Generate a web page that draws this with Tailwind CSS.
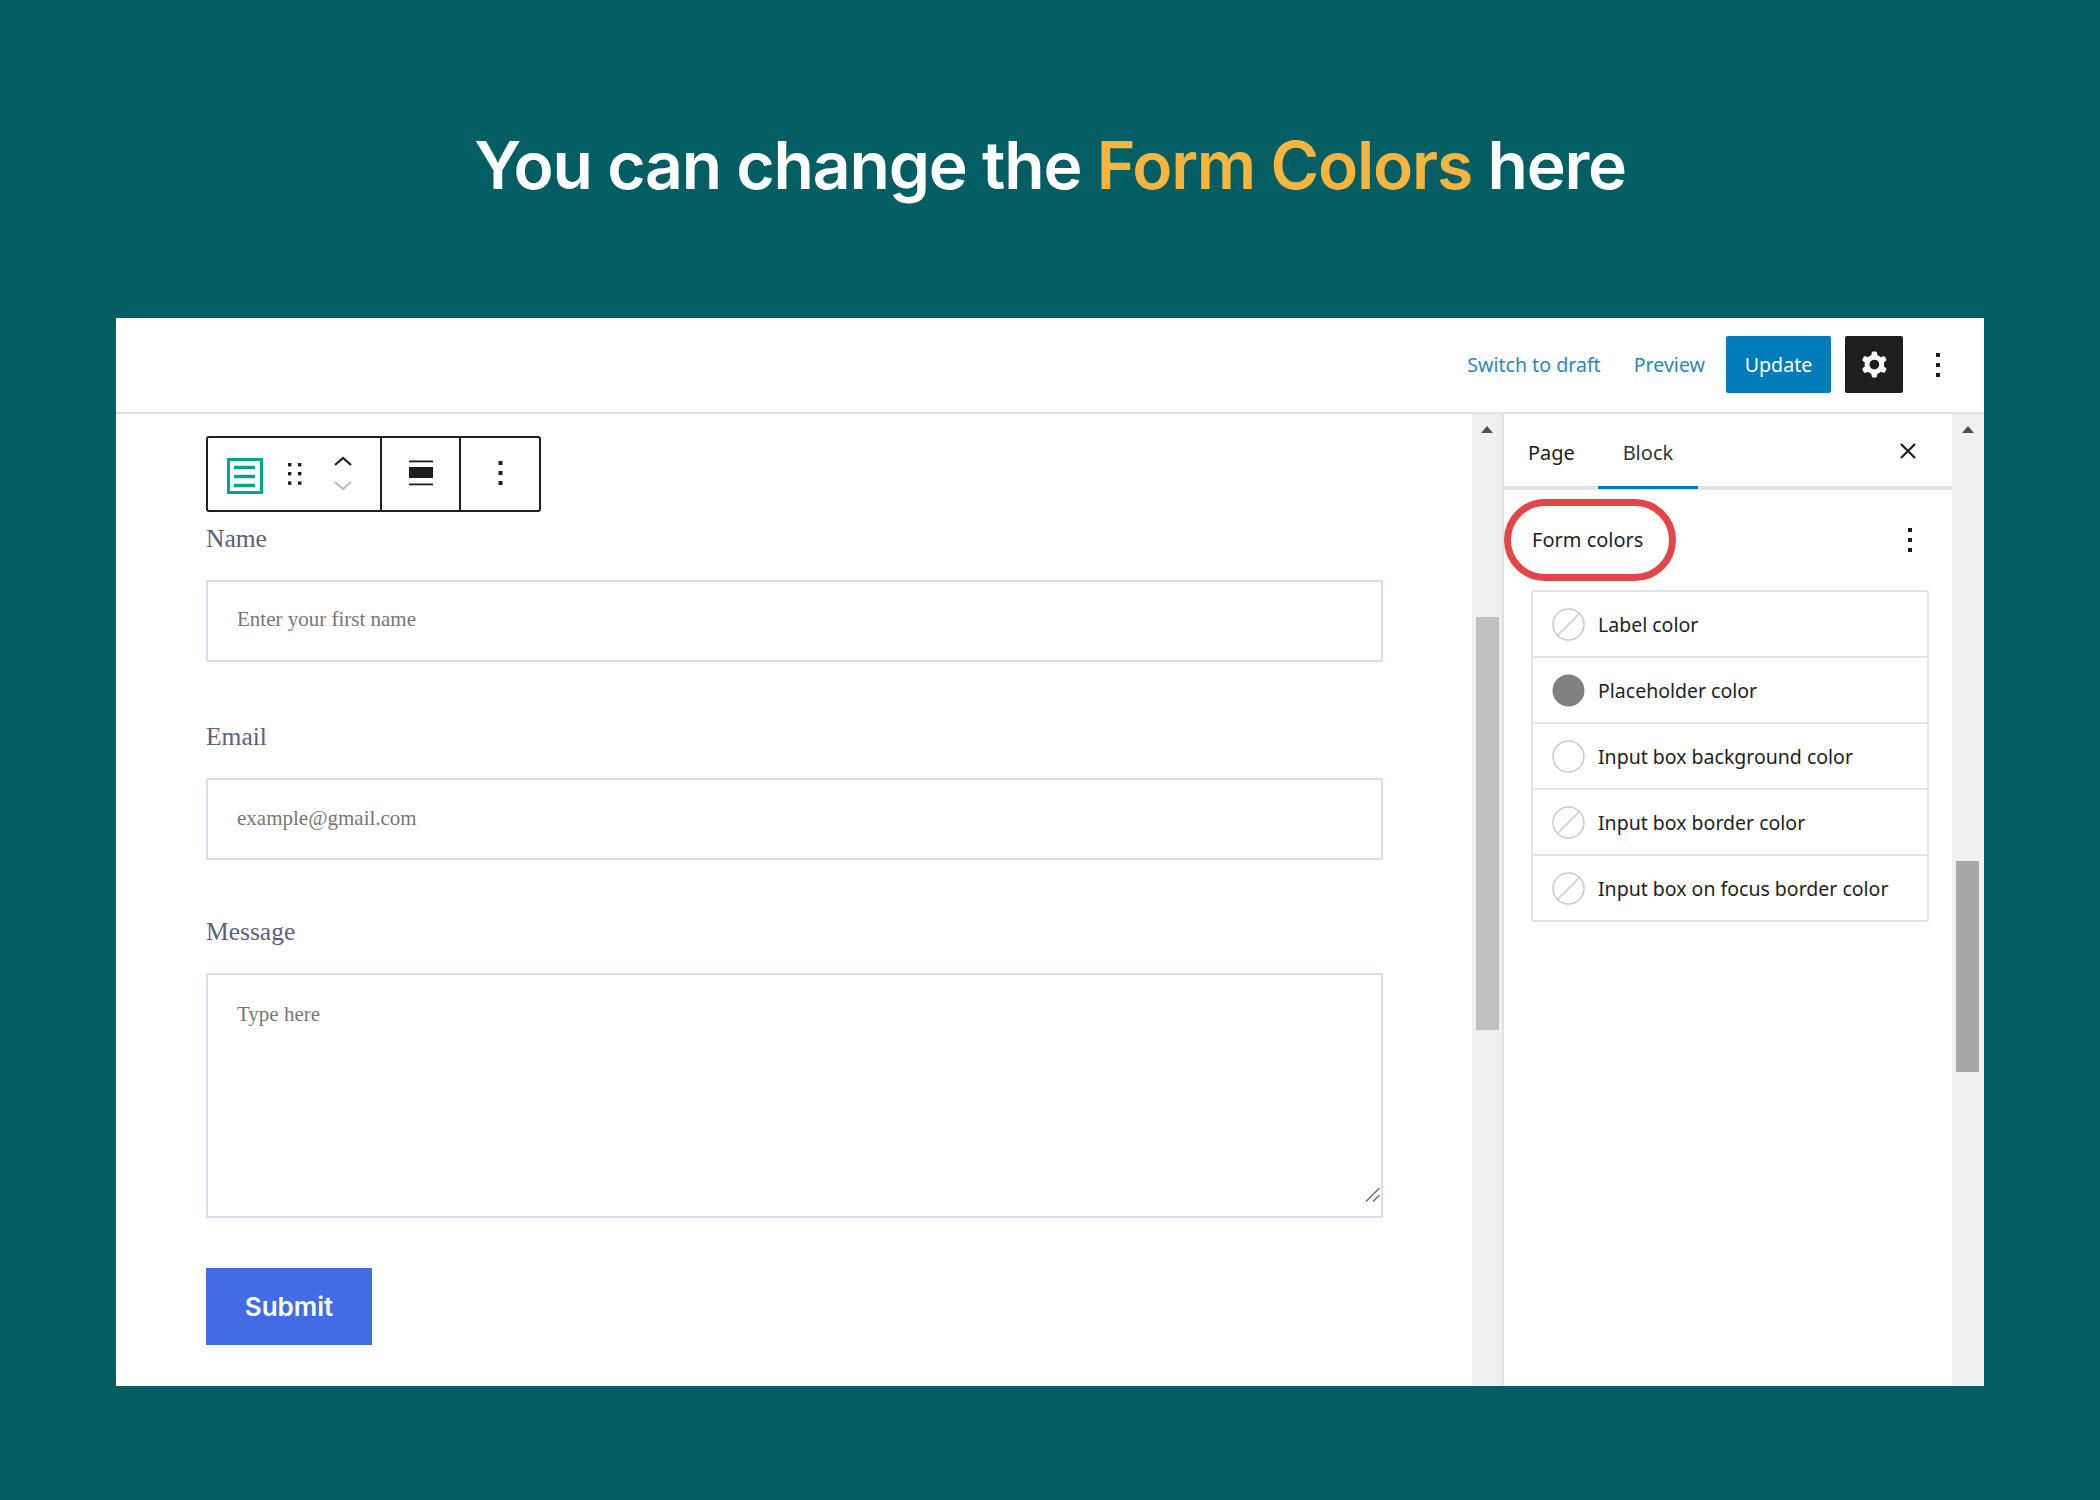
<!DOCTYPE html>
<html lang="en">
<head>
    <meta charset="UTF-8" />
    <title>Form Colors</title>
    <script src="https://cdn.jsdelivr.net/npm/@tailwindcss/browser@4"></script>
</head>
<body class="bg-[#025e63] w-[2100px] h-[1500px] overflow-hidden">

    <h1 class="h-[318px] pt-[124px] text-center text-white text-[66px] leading-[82px] tracking-[-1.2px] font-semibold font-['Inter',sans-serif]">You can change the <span class="text-[#f7b53f]">Form Colors</span> here</h1>

    <div class="ml-[116px] w-[1868px] h-[1068px] bg-white flex flex-col">

        <!-- top bar -->
        <header class="h-[96px] pb-[1px] border-b-2 border-[#e0e0e0] flex items-center justify-end font-['Noto_Sans',sans-serif] text-[19.6px]">
            <a class="text-[#2f86bd] mr-[33px]">Switch to draft</a>
            <a class="text-[#2f86bd] mr-[21px]">Preview</a>
            <button class="w-[105px] h-[57px] bg-[#007cba] text-white rounded-[2px] mr-[14px]">Update</button>
            <button class="w-[58px] h-[57px] bg-[#1e1e1e] rounded-[2px] flex items-center justify-center mr-[33px]">
                <svg width="39" height="39" viewBox="0 0 24 24" fill="#fff"><path fill-rule="evenodd" d="M10.289 4.836A1 1 0 0111.275 4h1.306a1 1 0 01.987.836l.244 1.466c.787.26 1.503.679 2.108 1.218l1.393-.522a1 1 0 011.216.437l.653 1.13a1 1 0 01-.23 1.273l-1.148.944a6.025 6.025 0 010 2.435l1.149.946a1 1 0 01.23 1.272l-.653 1.13a1 1 0 01-1.216.437l-1.394-.522c-.605.54-1.32.958-2.108 1.218l-.244 1.466a1 1 0 01-.987.836h-1.306a1 1 0 01-.986-.836l-.244-1.466a5.995 5.995 0 01-2.108-1.218l-1.394.522a1 1 0 01-1.217-.436l-.653-1.131a1 1 0 01.23-1.272l1.149-.946a6.026 6.026 0 010-2.435l-1.148-.944a1 1 0 01-.23-1.272l.653-1.131a1 1 0 011.217-.437l1.393.522a5.994 5.994 0 012.108-1.218l.244-1.466zM14.929 12a3 3 0 11-6 0 3 3 0 016 0z"/></svg>
            </button>
            <svg width="4" height="24" viewBox="0 0 4 24" fill="#1e1e1e" class="mr-[44px]"><rect width="4" height="4" y="0"/><rect width="4" height="4" y="10"/><rect width="4" height="4" y="20"/></svg>
        </header>

        <div class="flex flex-1 min-h-0">

            <!-- form area -->
            <main class="w-[1356px] pl-[90px] font-['Liberation_Serif',serif]">
                <div class="mt-[22px] w-[335px] h-[76px] border-2 border-[#1e1e1e] rounded-[3px] flex">
                    <div class="w-[174px] flex items-start pl-[19px] pt-[20px] border-r-2 border-[#1e1e1e]">
                        <svg width="36" height="36" viewBox="0 0 36 36" fill="none" stroke="#06a684"><rect x="1.5" y="1.5" width="33" height="33" stroke-width="3"/><path d="M7 9.5h21M7 18.5h21M7 27.5h21" stroke-width="3.4"/></svg>
                        <svg width="14" height="22" viewBox="0 0 14 22" fill="#1e1e1e" class="ml-[25px] mt-[5px]"><rect x="0" y="0" width="3.4" height="3.4"/><rect x="10" y="0" width="3.4" height="3.4"/><rect x="0" y="9" width="3.4" height="3.4"/><rect x="10" y="9" width="3.4" height="3.4"/><rect x="0" y="18.4" width="3.4" height="3.4"/><rect x="10" y="18.4" width="3.4" height="3.4"/></svg>
                        <svg width="18" height="36" viewBox="0 0 18 36" fill="none" stroke-width="2.2" class="ml-[32px] mt-[-3px]"><path d="M1 10l8-7 8 7" stroke="#1e1e1e"/><path d="M1 27l8 7 8-7" stroke="#bdbdbd"/></svg>
                    </div>
                    <div class="w-[79px] flex items-center justify-center border-r-2 border-[#1e1e1e] pb-[2px]">
                        <svg width="26" height="26" viewBox="0 0 26 26" fill="#1e1e1e"><rect x="1" y="0.5" width="24" height="1.8"/><rect x="1" y="7" width="24" height="11"/><rect x="1" y="23.5" width="24" height="1.8"/></svg>
                    </div>
                    <div class="flex-1 flex items-center justify-center pb-[2px]">
                        <svg width="5" height="24" viewBox="0 0 5 24" fill="#1e1e1e"><rect width="4" height="4" x="0.5" y="0"/><rect width="4" height="4" x="0.5" y="10"/><rect width="4" height="4" x="0.5" y="20"/></svg>
                    </div>
                </div>

                <label class="block mt-[12px] text-[25.5px] leading-[30px] text-[#5c6080]">Name</label>
                <input class="block mt-[26px] w-[1177px] h-[82px] border-2 border-[#d9dded] px-[29px] pb-[3px] text-[21px] outline-none placeholder:text-[#777]" placeholder="Enter your first name" />

                <label class="block mt-[60px] text-[25.5px] leading-[30px] text-[#5c6080]">Email</label>
                <input class="block mt-[26px] w-[1177px] h-[82px] border-2 border-[#d9dded] px-[29px] pb-[2px] text-[21px] outline-none placeholder:text-[#777]" placeholder="example@gmail.com" />

                <label class="block mt-[57px] text-[25.5px] leading-[30px] text-[#5c6080]">Message</label>
                <div class="relative mt-[26px] w-[1177px]">
                    <textarea class="block w-full h-[245px] resize-none border-2 border-[#d9dded] px-[29px] py-[24px] text-[21px] outline-none placeholder:text-[#777]" placeholder="Type here"></textarea>
                    <svg width="15" height="15" viewBox="0 0 15 15" fill="none" stroke="#666" stroke-width="1.3" class="absolute right-[3px] bottom-[16px]"><path d="M1 14.5L14.5 1M8 14.5L14.5 8"/></svg>
                </div>

                <button class="block mt-[50px] w-[166px] h-[77px] bg-[#406ce5] text-white text-[26px] font-semibold font-['Inter',sans-serif]">Submit</button>
            </main>

            <!-- first scrollbar -->
            <div class="w-[30px] bg-[#f0f0f0] flex flex-col items-center">
                <div class="mt-[12px] w-0 h-0 border-x-[6px] border-x-transparent border-b-[7px] border-b-[#505050]"></div>
                <div class="mt-[184px] w-[23px] h-[413px] bg-[#c0c0c0]"></div>
            </div>

            <!-- settings sidebar -->
            <aside class="relative w-[450px] border-l-2 border-[#e0e0e0] font-['Noto_Sans',sans-serif] text-[#1e1e1e]">
                <div class="h-[76px] border-b-4 border-[#e4e4e4] flex text-[20px] pl-[24px]">
                    <span class="mt-[24px]">Page</span>
                    <span class="ml-[23px] w-[100px] h-[75px] pt-[24px] text-center border-b-[3px] border-[#007cba] text-[#333]">Block</span>
                    <svg width="16" height="16" viewBox="0 0 16 16" fill="none" stroke="#1e1e1e" stroke-width="2.2" class="ml-[202px] mt-[29px]"><path d="M1 1l14 14M15 1L1 15"/></svg>
                </div>

                <div class="flex items-center h-[100px] pl-[28px] text-[20px]">
                    <span>Form colors</span>
                    <svg width="4" height="24" viewBox="0 0 4 24" fill="#1e1e1e" class="ml-[265px]"><rect width="4" height="4" y="0"/><rect width="4" height="4" y="10"/><rect width="4" height="4" y="20"/></svg>
                </div>

                <ul class="ml-[27px] w-[398px] border-2 border-[#e4e4e4] rounded-[2px] text-[19.5px] text-[#1e1e1e]">
                    <li class="h-[66px] flex items-center pl-[19px] border-b-2 border-[#e4e4e4]">
                        <svg width="33" height="33" viewBox="0 0 33 33" fill="none" stroke="#c9c9c9" stroke-width="1.5"><circle cx="16.5" cy="16.5" r="15.5"/><path d="M6 27L27 6"/></svg>
                        <span class="ml-[13px] mt-[1px]">Label color</span>
                    </li>
                    <li class="h-[66px] flex items-center pl-[19px] border-b-2 border-[#e4e4e4]">
                        <svg width="33" height="33" viewBox="0 0 33 33"><circle cx="16.5" cy="16.5" r="16" fill="#808080"/></svg>
                        <span class="ml-[13px] mt-[1px]">Placeholder color</span>
                    </li>
                    <li class="h-[66px] flex items-center pl-[19px] border-b-2 border-[#e4e4e4]">
                        <svg width="33" height="33" viewBox="0 0 33 33" fill="none" stroke="#c9c9c9" stroke-width="1.5"><circle cx="16.5" cy="16.5" r="15.5"/></svg>
                        <span class="ml-[13px] mt-[1px]">Input box background color</span>
                    </li>
                    <li class="h-[66px] flex items-center pl-[19px] border-b-2 border-[#e4e4e4]">
                        <svg width="33" height="33" viewBox="0 0 33 33" fill="none" stroke="#c9c9c9" stroke-width="1.5"><circle cx="16.5" cy="16.5" r="15.5"/><path d="M6 27L27 6"/></svg>
                        <span class="ml-[13px] mt-[1px]">Input box border color</span>
                    </li>
                    <li class="h-[64px] flex items-center pl-[19px]">
                        <svg width="33" height="33" viewBox="0 0 33 33" fill="none" stroke="#c9c9c9" stroke-width="1.5"><circle cx="16.5" cy="16.5" r="15.5"/><path d="M6 27L27 6"/></svg>
                        <span class="ml-[13px] mt-[1px]">Input box on focus border color</span>
                    </li>
                </ul>

                <!-- red marker round the section title -->
                <div class="absolute left-[0px] top-[85px] w-[172px] h-[82px] border-[7px] border-[#e24648] rounded-[41px]"></div>
            </aside>

            <!-- second scrollbar -->
            <div class="w-[32px] pr-[1px] bg-[#f0f0f0] flex flex-col items-center">
                <div class="mt-[12px] w-0 h-0 border-x-[6px] border-x-transparent border-b-[7px] border-b-[#505050]"></div>
                <div class="mt-[428px] w-[23px] h-[211px] bg-[#a8a8a8]"></div>
            </div>
        </div>
    </div>

</body>
</html>
